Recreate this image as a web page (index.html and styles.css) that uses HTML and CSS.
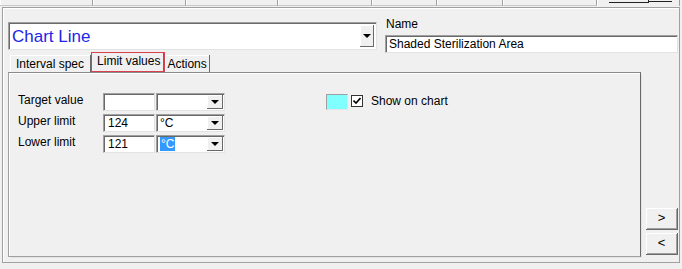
FILE: index.html
```html
<!DOCTYPE html>
<html lang="en">
<head>
    <meta charset="UTF-8">
    <title>Chart Line - Limit values</title>
    <link rel="stylesheet" href="styles.css">
</head>
<body>
    <div class="strip">
        <div class="strip-tab" style="width: 93px"></div>
        <div class="strip-tab" style="width: 93px"></div>
        <div class="strip-tab" style="width: 92px"></div>
        <div class="strip-tab" style="width: 94px"></div>
        <div class="strip-tab" style="width: 65px"></div>
        <div class="strip-tab" style="width: 66px"></div>
        <div class="strip-tab" style="width: 94px"></div>
        <div class="strip-tab last">
            <span class="ul ul-a"></span><span class="ul ul-b"></span>
        </div>
    </div>

    <div class="frame">
        <div class="top-row">
            <div class="big-combo">
                <span class="big-combo-text">Chart Line</span>
                <span class="drop-btn big"><i class="arrow"></i></span>
            </div>
            <div class="name-block">
                <div class="name-label">Name</div>
                <div class="name-input">Shaded Sterilization Area</div>
            </div>
        </div>

        <div class="tabs">
            <div class="tab wide">Interval spec</div>
            <div class="tab selected">Limit values</div>
            <div class="tab narrow">Actions</div>
        </div>

        <div class="body-row">
            <div class="panel">
                <div class="form-row">
                    <span class="label">Target value</span>
                    <span class="field"></span>
                    <span class="combo"><span class="combo-text"></span><span class="drop-btn"><i class="arrow"></i></span></span>
                    <span class="swatch"></span>
                    <span class="check">
                        <svg width="8" height="8" viewBox="0 0 8 8"><path d="M0.5 3.5 L3 6 L7.5 1" fill="none" stroke="#000" stroke-width="1.6"/></svg>
                    </span>
                    <span class="check-label">Show on chart</span>
                </div>
                <div class="form-row">
                    <span class="label">Upper limit</span>
                    <span class="field">124</span>
                    <span class="combo"><span class="combo-text">&deg;C</span><span class="drop-btn"><i class="arrow"></i></span></span>
                </div>
                <div class="form-row">
                    <span class="label">Lower limit</span>
                    <span class="field">121</span>
                    <span class="combo"><span class="combo-text"><span class="highlight">&deg;C</span></span><span class="drop-btn"><i class="arrow"></i></span></span>
                </div>
            </div>
            <div class="side-buttons">
                <div class="btn">&gt;</div>
                <div class="btn">&lt;</div>
            </div>
        </div>
    </div>
</body>
</html>
```

FILE: styles.css
```css
* {
    box-sizing: border-box;
}

body {
    margin: 0;
    background: #f0f0f0;
    font-family: 'Liberation Sans', Arial, sans-serif;
    font-size: 12px;
    color: #000;
    width: 682px;
    height: 269px;
    overflow: hidden;
}

/* tab strip cut off at the top */
.strip {
    display: flex;
    height: 7px;
}

.strip-tab {
    height: 6px;
    border-right: 1px solid #a0a0a0;
    border-bottom: 1px solid #c8c8c8;
    box-shadow: inset 1px 0 #fff;
}

.strip-tab.last {
    width: 83px;
    display: flex;
    padding-left: 12px;
    border-bottom: none;
}

.ul {
    height: 2px;
    border-bottom: 1px solid #222;
}

.ul-a {
    width: 40px;
    border-right: 1px solid #222;
    height: 3px;
}

.ul-b {
    width: 23px;
}

/* main frame */
.frame {
    margin-left: 2px;
    width: 678px;
    height: 256px;
    border: 1px solid #a0a0a0;
    box-shadow: inset 1px 1px #fff;
    padding: 9px 0 0 5px;
}

.top-row {
    display: flex;
    align-items: flex-start;
}

.big-combo {
    margin-top: 5px;
    width: 369px;
    height: 28px;
    background: #fff;
    border: 1px solid;
    border-color: #a0a0a0 #e3e3e3 #e3e3e3 #a0a0a0;
    box-shadow: inset 1px 1px #696969;
    display: flex;
    align-items: center;
    padding: 1px 1px 0 3px;
}

.big-combo-text {
    flex: 1;
    font-size: 17px;
    color: #2424e6;
    line-height: 20px;
}

.drop-btn {
    width: 16px;
    align-self: stretch;
    background: #f0f0f0;
    border-right: 1px solid #696969;
    border-bottom: 1px solid #696969;
    box-shadow: inset 1px 1px #fff;
    display: flex;
    align-items: center;
    justify-content: center;
}

.drop-btn.big {
    width: 14px;
    margin: 1px 1px 2px 0;
}

.arrow {
    width: 0;
    height: 0;
    border-left: 4px solid transparent;
    border-right: 4px solid transparent;
    border-top: 4px solid #000;
}

.name-block {
    margin-left: 8px;
    width: 293px;
}

.name-label {
    line-height: 15px;
    padding-left: 1px;
}

.name-input {
    margin-top: 3px;
    height: 18px;
    background: #fff;
    border: 1px solid;
    border-color: #a0a0a0 #e3e3e3 #e3e3e3 #a0a0a0;
    box-shadow: inset 1px 1px #696969;
    padding: 1px 0 0 3px;
    line-height: 15px;
}

/* inner tabs */
.tabs {
    display: flex;
    align-items: flex-end;
    margin-top: -1px;
    height: 20px;
    padding-left: 2px;
}

.tab {
    height: 17px;
    padding: 2px 4px 0 6px;
    line-height: 15px;
    border-right: 1px solid #696969;
    box-shadow: inset 1px 1px #fff;
}

.tab.wide {
    padding-right: 6px;
}

.tab.selected {
    height: 20px;
    padding: 1px 4px 0 5px;
    line-height: 14px;
    border: 1px solid #d9404e;
    box-shadow: inset -1px 0 #696969;
}

.tab.narrow {
    padding: 2px 2px 0 2px;
}

.body-row {
    display: flex;
}

.panel {
    width: 633px;
    height: 185px;
    border: 1px solid;
    border-color: #8a8a8a #696969 #a0a0a0 #a0a0a0;
    box-shadow: inset 1px 1px #fff, 2px 2px 0 -1px #e3e3e3;
    padding: 20px 0 0 9px;
}

.form-row {
    display: flex;
    align-items: flex-start;
    height: 18px;
    margin-bottom: 3px;
}

.label {
    width: 85px;
    line-height: 14px;
}

.field {
    width: 52px;
    height: 18px;
    margin-right: 1px;
    background: #fff;
    border: 1px solid;
    border-color: #a0a0a0 #e3e3e3 #e3e3e3 #a0a0a0;
    box-shadow: inset 1px 1px #696969;
    padding: 1px 0 0 4px;
    line-height: 15px;
}

.combo {
    width: 69px;
    height: 18px;
    display: flex;
    background: #fff;
    border: 1px solid;
    border-color: #a0a0a0 #e3e3e3 #e3e3e3 #a0a0a0;
    box-shadow: inset 1px 1px #696969;
    padding: 1px 1px 1px 2px;
}

.combo-text {
    flex: 1;
    line-height: 15px;
    padding-left: 1px;
}

.highlight {
    background: #3399ff;
    color: #fff;
    padding: 0 1px;
}

.swatch {
    margin: 1px 0 0 101px;
    width: 22px;
    height: 16px;
    background: #80ffff;
    border: 1px solid;
    border-color: #a0a0a0 #e3e3e3 #e3e3e3 #a0a0a0;
}

.check {
    margin: 2px 0 0 3px;
    width: 12px;
    height: 12px;
    background: #fff;
    border: 1px solid #333;
    display: flex;
    align-items: center;
    justify-content: center;
}

.check-label {
    margin-left: 8px;
    line-height: 14px;
    margin-top: 1px;
}

/* right side buttons */
.side-buttons {
    margin-left: 5px;
    width: 32px;
    display: flex;
    flex-direction: column;
    justify-content: flex-end;
    gap: 3px;
    padding-bottom: 2px;
}

.btn {
    height: 22px;
    border-right: 1px solid #696969;
    border-bottom: 1px solid #696969;
    box-shadow: inset 1px 1px #fff, inset -1px -1px #a0a0a0;
    text-align: center;
    line-height: 20px;
    font-size: 13px;
}
```
